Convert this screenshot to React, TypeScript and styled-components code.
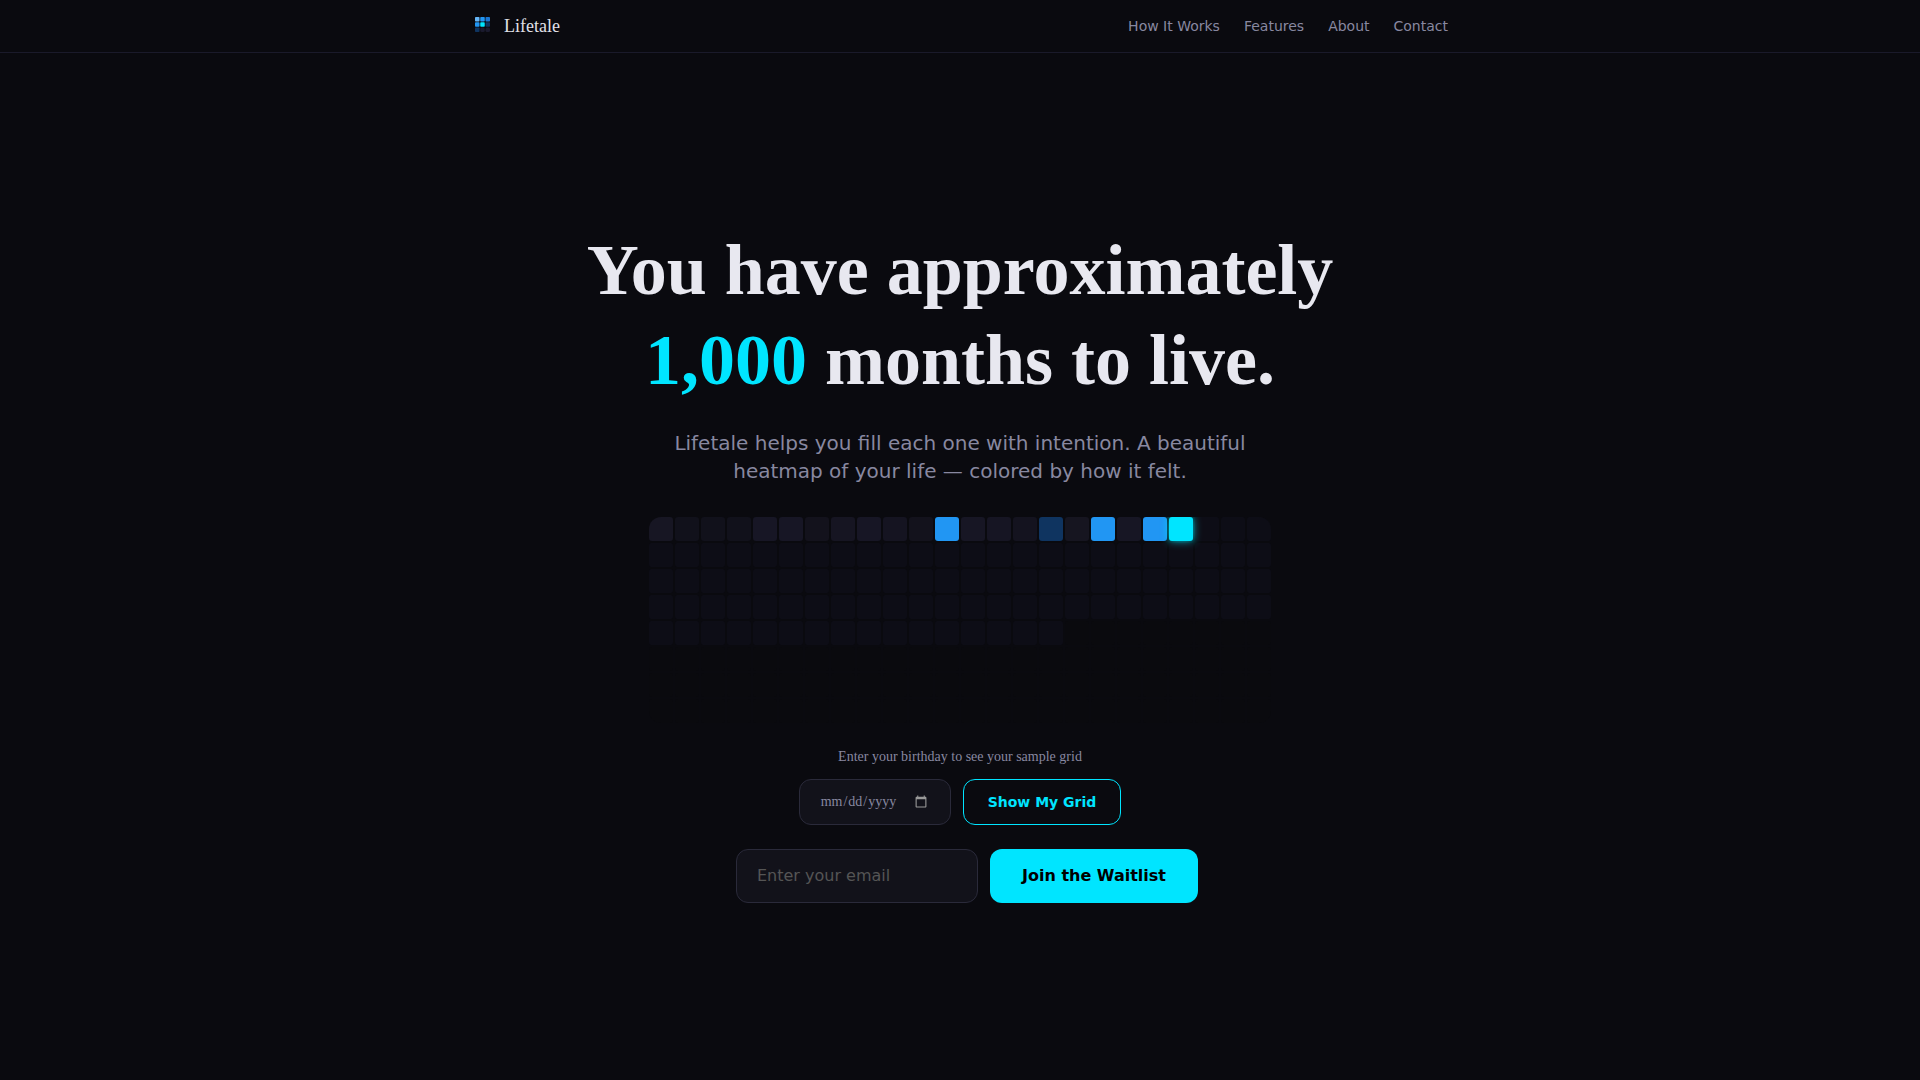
import React from "react";
import styled, { createGlobalStyle } from "styled-components";

const SANS = '"DejaVu Sans", sans-serif';
const SERIF = '"Liberation Serif", serif';

const GlobalStyle = createGlobalStyle`
  *, *::before, *::after {
    box-sizing: border-box;
  }
  body {
    margin: 0;
    background: #0a0a0f;
    color: #e8e8f0;
    font-family: ${SERIF};
  }
`;

const Header = styled.header`
  position: fixed;
  inset: 0 0 auto 0;
  z-index: 10;
  background: #0a0a0f;
  border-bottom: 1px solid #1a1a2a;
`;

const HeaderInner = styled.div`
  display: flex;
  align-items: center;
  justify-content: space-between;
  max-width: 1024px;
  height: 52px;
  margin: 0 auto;
  padding: 0 24px;
`;

const Brand = styled.a`
  display: flex;
  align-items: center;
  gap: 8px;
  color: #e0e0e8;
  font-size: 18px;
  text-decoration: none;
`;

const Nav = styled.nav`
  display: flex;
  gap: 24px;
`;

const NavLink = styled.a`
  color: #8888a0;
  font-family: ${SANS};
  font-size: 14px;
  text-decoration: none;
`;

const Hero = styled.main`
  display: flex;
  flex-direction: column;
  align-items: center;
  justify-content: center;
  min-height: 100vh;
  padding: 96px 24px 48px;
  text-align: center;
`;

const Title = styled.h1`
  max-width: 800px;
  margin: 0 0 24px;
  font-size: 72px;
  font-weight: 700;
  line-height: 90px;
`;

const Accent = styled.span`
  color: #00e5ff;
`;

const Subtitle = styled.p`
  max-width: 600px;
  margin: 0 0 32px;
  color: #8888a0;
  font-family: ${SANS};
  font-size: 20px;
  line-height: 28px;
`;

const MonthGrid = styled.div`
  display: grid;
  grid-template-columns: repeat(24, 24px);
  grid-auto-rows: 24px;
  gap: 2px;
  margin-bottom: 24px;
  border-radius: 12px;
  overflow: hidden;
`;

const Month = styled.div<{ $color: string; $current: boolean }>`
  border-radius: 3px;
  background: ${(p) => p.$color};
  box-shadow: ${(p) => (p.$current ? "0 0 8px rgba(0, 229, 255, 0.9)" : "none")};
`;

const BirthdayForm = styled.form`
  display: flex;
  flex-direction: column;
  align-items: center;
  gap: 12px;
  margin-bottom: 24px;
`;

const BirthdayLabel = styled.label`
  color: #8888a0;
  font-size: 14px;
  line-height: 20px;
`;

const Row = styled.div`
  display: flex;
  justify-content: center;
  gap: 12px;
`;

const EmailForm = styled.form`
  display: flex;
  justify-content: center;
  gap: 12px;
  padding-left: 14px;
`;

const Field = styled.input`
  border: 1px solid #2a2a3a;
  border-radius: 12px;
  background: #12121a;
  color: #e8e8f0;
  outline: none;
`;

const DateField = styled(Field)`
  width: 152px;
  height: 46px;
  padding: 0 20px;
  color: #8888a0;
  font-family: ${SERIF};
  font-size: 14px;

  &::-webkit-calendar-picker-indicator {
    filter: invert(0.6);
  }
`;

const EmailField = styled(Field)`
  width: 242px;
  height: 54px;
  padding: 0 20px 2px;
  font-family: ${SANS};
  font-size: 16px;

  &::placeholder {
    color: #555555;
  }
`;

const Button = styled.button`
  border-radius: 12px;
  font-family: ${SANS};
  font-weight: 700;
  cursor: pointer;
`;

const OutlineButton = styled(Button)`
  height: 46px;
  padding: 0 24px;
  border: 1px solid #00e5ff;
  background: transparent;
  color: #00e5ff;
  font-size: 14px;
`;

const PrimaryButton = styled(Button)`
  height: 54px;
  padding: 0 32px 2px;
  border: 0;
  background: #00e5ff;
  color: #000000;
  font-size: 16px;
`;

const COLUMNS = 24;
const ROWS = 8;
const CURRENT_MONTH = 20;
const REVEALED_MONTHS = 112;

const lived = [
  "#171623", "#11111b", "#11111b", "#11111b", "#171625", "#171625",
  "#13121c", "#161522", "#171625", "#151421", "#13121c", "#2196f3",
  "#171624", "#161523", "#14131f", "#0f3460", "#161520", "#2196f3",
  "#171624", "#2196f3", "#00e5ff",
];

const months = Array.from({ length: COLUMNS * ROWS }, (_, i) => {
  if (i < lived.length) return lived[i];
  return i < REVEALED_MONTHS ? "rgba(26, 26, 52, 0.22)" : "#0a0a0e";
});

const logoColors = [
  "#64b5f6", "#2196f3", "#1976d2",
  "#2196f3", "#00e5ff", "#0f3460",
  "#0f3460", "#1a1a2e", "#1a1a2e",
];

const links = ["How It Works", "Features", "About", "Contact"];

function Logo() {
  return (
    <svg width="24" height="24" viewBox="0 0 32 32" aria-hidden="true">
      {logoColors.map((color, i) => (
        <rect
          key={i}
          x={4 + (i % 3) * 7}
          y={4 + Math.floor(i / 3) * 7}
          width="6"
          height="6"
          rx={i > 6 ? 2 : 1}
          fill={color}
        />
      ))}
    </svg>
  );
}

export default function App() {
  const stay = (event: React.FormEvent) => event.preventDefault();

  return (
    <>
      <GlobalStyle />
      <Header>
        <HeaderInner>
          <Brand href="#">
            <Logo />
            Lifetale
          </Brand>
          <Nav>
            {links.map((label) => (
              <NavLink key={label} href={`#${label.toLowerCase().replace(/ /g, "-")}`}>
                {label}
              </NavLink>
            ))}
          </Nav>
        </HeaderInner>
      </Header>
      <Hero>
        <Title>
          You have approximately <Accent>1,000</Accent> months to live.
        </Title>
        <Subtitle>
          Lifetale helps you fill each one with intention. A beautiful heatmap of your life —
          colored by how it felt.
        </Subtitle>
        <MonthGrid>
          {months.map((color, i) => (
            <Month key={i} $color={color} $current={i === CURRENT_MONTH} />
          ))}
        </MonthGrid>
        <BirthdayForm onSubmit={stay}>
          <BirthdayLabel htmlFor="birthday">Enter your birthday to see your sample grid</BirthdayLabel>
          <Row>
            <DateField id="birthday" type="date" />
            <OutlineButton type="submit">Show My Grid</OutlineButton>
          </Row>
        </BirthdayForm>
        <EmailForm onSubmit={stay}>
          <EmailField type="email" placeholder="Enter your email" aria-label="Enter your email" />
          <PrimaryButton type="submit">Join the Waitlist</PrimaryButton>
        </EmailForm>
      </Hero>
    </>
  );
}
